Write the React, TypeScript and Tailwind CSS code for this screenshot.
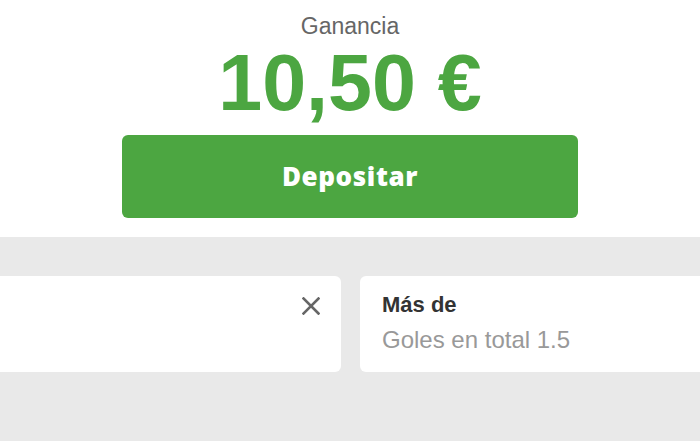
export default function App() {
  return (
    <div className="w-[700px] h-[441px] overflow-hidden bg-[#e9e9e9] font-['Liberation_Sans',Arial,sans-serif]">
      {/* Resumen */}
      <div className="h-[237px] bg-white flex flex-col items-center pt-[14px]">
        <p className="text-[23px] leading-[24px] text-[#666666]">Ganancia</p>
        <p className="text-[79px] leading-[90px] font-bold text-[#4ca641]">10,50 €</p>
        <button className="mt-[7px] w-[456px] h-[83px] rounded-[6px] bg-[#4ca641] text-white text-[26px] font-extrabold font-['Open_Sans',sans-serif] tracking-[0.6px]">
          Depositar
        </button>
      </div>
      {/* Apuestas */}
      <div className="pt-[39px] flex gap-[19px] -ml-[59px]">
        <div className="w-[400px] h-[96px] shrink-0 bg-white rounded-[6px] flex justify-end pt-[21px] pr-[21px]">
          <svg width="18" height="18" viewBox="0 0 18 18" className="text-[#666666]">
            <path d="M1.5 1.5L16.5 16.5M16.5 1.5L1.5 16.5" stroke="currentColor" strokeWidth="2.6" strokeLinecap="square" />
          </svg>
        </div>
        <div className="w-[400px] h-[96px] shrink-0 bg-white rounded-[6px] pl-[22px] pt-[18px]">
          <p className="text-[22px] leading-[22px] font-bold text-[#333333]">Más de</p>
          <p className="text-[24px] leading-[24px] text-[#999999] mt-[12px]">Goles en total 1.5</p>
        </div>
      </div>
    </div>
  );
}
